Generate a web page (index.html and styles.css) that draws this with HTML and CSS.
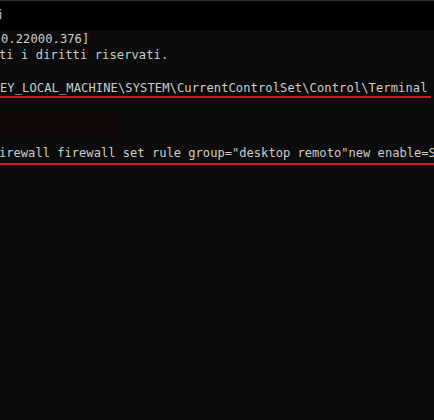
FILE: index.html
```html
<!DOCTYPE html>
<html>
<head>
<meta charset="utf-8">
<link rel="stylesheet" href="styles.css">
</head>
<body>
<div class="titlebar"><span class="tab">i</span></div>
<div class="term">
  <div class="line l1">0.22000.376]</div>
  <div class="line l2">ti i diritti riservati.</div>
  <div class="line">&nbsp;</div>
  <div class="line l4 mark mark-a">EY_LOCAL_MACHINE\SYSTEM\CurrentControlSet\Control\Terminal</div>
  <div class="line">&nbsp;</div>
  <div class="line">&nbsp;</div>
  <div class="line">&nbsp;</div>
  <div class="line l8 mark mark-b">irewall firewall set rule group="desktop remoto"new enable=S</div>
  <div class="redact"></div>
</div>
</body>
</html>
```
FILE: styles.css
```css
html, body {
  margin: 0;
  padding: 0;
  background: #0c0c0c;
  width: 434px;
  height: 420px;
  overflow: hidden;
}
.titlebar {
  height: 29px;
  background: #000;
  border-top: 1px solid #2e2e2e;
  display: flex;
  align-items: flex-start;
}
.tab {
  font-family: "Noto Sans", sans-serif;
  font-size: 12px;
  line-height: 12px;
  color: #cfcfcf;
  padding-top: 8px;
  margin-left: -1px;
}
.term {
  position: relative;
  padding-top: 1px;
  font-family: "DejaVu Sans Mono", monospace;
  font-size: 12.1px;
  line-height: 16.3px;
  color: #cccccc;
}
.line {
  height: 16.3px;
  white-space: pre;
}
.l1 { padding-left: 1px; letter-spacing: 0.08px; }
.l2 { margin-left: -1px; letter-spacing: 0.08px; }
.l4 { padding-left: 0; letter-spacing: 0.09px; }
.l8 { margin-left: -1px; }
.mark { position: relative; }
.mark::after {
  content: "";
  position: absolute;
  left: 0;
  height: 2px;
  background: #d81324;
}
.mark-a::after { bottom: -2px; width: 431px; }
.mark-b::after { bottom: -4px; width: 436px; }
.redact {
  position: absolute;
  left: 0;
  top: 83px;
  width: 117px;
  height: 23px;
  background: #130808;
}
```
